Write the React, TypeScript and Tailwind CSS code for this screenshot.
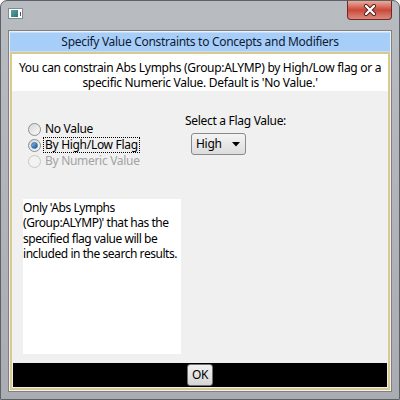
import React from 'react';

const font = { fontFamily: '"Noto Sans", "Open Sans", sans-serif' };

const Radio: React.FC<{ checked?: boolean; disabled?: boolean; label: string; focused?: boolean }> = ({
  checked,
  disabled,
  label,
  focused,
}) => (
  <div className="flex h-[16px] items-center">
    <span
      className={`flex h-[13px] w-[13px] items-center justify-center rounded-full border ${
        disabled
          ? 'border-[#c8c8c8] bg-[#f2f2f2]'
          : 'border-[#8e8f8f] bg-gradient-to-br from-[#d6d6d6] to-[#fbfbfb]'
      }`}
    >
      {checked && (
        <span className="h-[7px] w-[7px] rounded-full border border-[#3a6fa8] bg-gradient-to-br from-[#7fc3ee] to-[#12508f]" />
      )}
    </span>
    <span
      className={`ml-[3px] px-[1px] text-[12px] leading-[14px] tracking-[-0.3px] ${
        disabled ? 'text-[#a3a3a3]' : 'text-black'
      } ${focused ? 'outline outline-1 outline-dotted outline-black' : ''}`}
    >
      {label}
    </span>
  </div>
);

export default function App() {
  return (
    <div
      className="flex h-[400px] w-[400px] flex-col rounded-t-[7px] border border-[#5d6066] bg-gradient-to-b from-[#b8bbc0] to-[#a9acb1]"
      style={font}
    >
      {/* title bar */}
      <div className="flex h-[29px] items-start justify-between">
        <div className="ml-[7px] mt-[7px] flex h-[11px] w-[15px] items-center border border-[#7f8a94] bg-white pl-[2px]">
          <span className="h-[7px] w-[7px] bg-gradient-to-br from-[#5aa89c] to-[#2f6f7c]" />
          <span className="ml-[2px] h-[4px] w-[1px] bg-[#555]" />
        </div>
        <div className="mr-[7px] flex h-[19px] w-[45px] items-center justify-center rounded-b-[4px] border border-t-0 border-[#6e2a22] bg-gradient-to-b from-[#e9ab9c] via-[#c9473a] to-[#d98a7c]">
          <svg width="14" height="12" viewBox="0 0 14 12">
            <path d="M3 2 L11 10 M11 2 L3 10" stroke="#4a1a14" strokeWidth="4" strokeLinecap="round" />
            <path d="M3 2 L11 10 M11 2 L3 10" stroke="#ffffff" strokeWidth="2.4" strokeLinecap="round" />
          </svg>
        </div>
      </div>

      {/* client area */}
      <div className="mx-[7px] mb-[7px] flex flex-1 flex-col border border-[#7d8086] bg-[#f0f0f0] p-[1px] text-[12px] tracking-[-0.3px]">
        <div className="h-[20px] whitespace-nowrap border-y border-[#c9def5] bg-[#a6cef9] text-center leading-[18px] text-[#111a33]">
          Specify Value Constraints to Concepts and Modifiers
        </div>

        <div className="flex flex-1 flex-col border-2 border-[#d8ca8e]">
          <div className="whitespace-nowrap bg-white pb-[1px] pt-[6px] text-center leading-[15px] text-black">
            <div>You can constrain Abs Lymphs (Group:ALYMP) by High/Low flag or a</div>
            <div>specific Numeric Value. Default is 'No Value.'</div>
          </div>

          <div className="flex flex-1 flex-col pl-[11px] pt-[22px]">
            <div className="flex">
              <div className="w-[162px] pl-[5px] pt-[8px]">
                <Radio label="No Value" />
                <Radio label="By High/Low Flag" checked focused />
                <Radio label="By Numeric Value" disabled />
              </div>
              <div className="flex flex-col">
                <div className="h-[16px] leading-[16px] text-black">Select a Flag Value:</div>
                <div className="ml-[6px] mt-[4px] flex h-[22px] w-[55px] items-center justify-between rounded-[3px] border border-[#8a8a8a] bg-gradient-to-b from-[#f4f4f4] to-[#dcdcdc] pl-[4px] pr-[5px]">
                  <span className="leading-[14px] text-black">High</span>
                  <svg width="8" height="5" viewBox="0 0 8 5">
                    <path d="M0 0 L8 0 L4 4.5 Z" fill="#000" />
                  </svg>
                </div>
              </div>
            </div>

            <div className="mt-[30px] h-[155px] w-[158px] bg-white pt-[1px] leading-[15.3px] tracking-[-0.45px] text-black">
              Only 'Abs Lymphs
              <br />
              (Group:ALYMP)' that has the
              <br />
              specified flag value will be
              <br />
              <span className="whitespace-nowrap">included in the search results.</span>
            </div>
          </div>

          <div className="mx-[1px] mb-[1px] flex h-[24px] justify-center bg-black">
            <button className="mt-[1px] h-[22px] w-[26px] rounded-[3px] border border-[#707070] bg-gradient-to-b from-[#f2f2f2] to-[#d5d5d5] leading-[14px] text-black">
              OK
            </button>
          </div>
        </div>
      </div>
    </div>
  );
}
